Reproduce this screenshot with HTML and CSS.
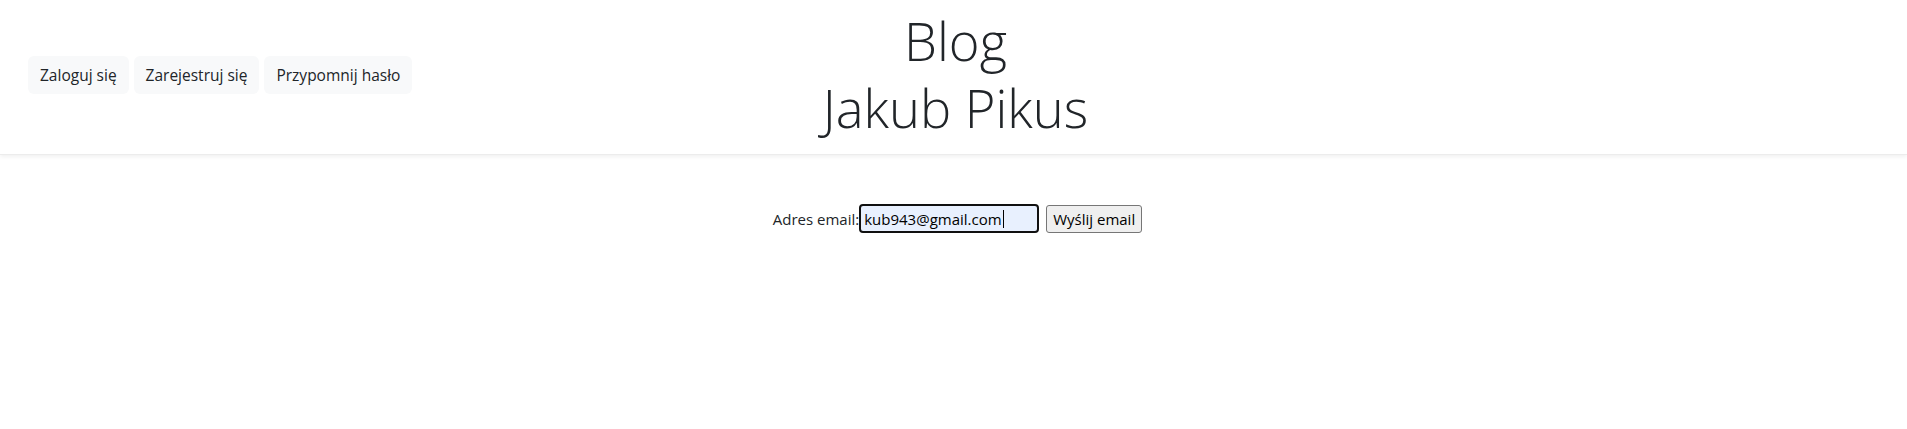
FILE: index.html
```html
<!DOCTYPE html>
<html lang="pl">
<head>
<meta charset="utf-8">
<title>Blog Jakub Pikus</title>
<link rel="stylesheet" href="styles.css">
</head>
<body>
<header class="topbar">
  <nav class="nav-left">
    <a class="btn-light" href="#">Zaloguj się</a>
    <a class="btn-light" href="#">Zarejestruj się</a>
    <a class="btn-light" href="#">Przypomnij hasło</a>
  </nav>
  <h1 class="title">Blog<br>Jakub Pikus</h1>
  <div class="nav-right"></div>
</header>
<main class="content">
  <form class="reset-form">
    <label class="field-label" for="email">Adres email:</label>
    <span class="input-wrap">
      <input class="email-input" id="email" type="text" value="kub943@gmail.com">
      <span class="caret"></span>
    </span>
    <button class="send-btn" type="button">Wyślij email</button>
  </form>
</main>
</body>
</html>
```
FILE: styles.css
```css
html, body {
  margin: 0;
  padding: 0;
  background: #fff;
}
body {
  font-family: "Open Sans", "Noto Sans", sans-serif;
  font-size: 15px;
  color: #212529;
}
.topbar {
  display: grid;
  grid-template-columns: 1fr auto 1fr;
  align-items: center;
  padding: 7px 28px 14px;
  height: 155px;
  box-sizing: border-box;
  border-bottom: 1px solid #ececec;
  box-shadow: 0 2px 4px rgba(0,0,0,0.06);
}
.nav-left {
  display: flex;
  gap: 5px;
  position: relative;
  top: 1px;
}
.btn-light {
  display: inline-block;
  background: #f8f9fa;
  color: #212529;
  text-decoration: none;
  padding: 7px 12px;
  line-height: 24px;
  border-radius: 6px;
  font-size: 15.5px;
}
.title {
  margin: 0;
  font-weight: 300;
  font-size: 52.5px;
  line-height: 67px;
  text-align: center;
  color: #212529;
  position: relative;
  left: 2px;
}
.content {
  display: flex;
  justify-content: center;
  padding-top: 49px;
  padding-left: 8px;
}
.reset-form {
  display: flex;
  align-items: center;
}
.field-label {
  font-size: 15px;
  line-height: 24px;
  color: #212529;
}
.input-wrap {
  position: relative;
  display: inline-block;
}
.email-input {
  box-sizing: border-box;
  width: 180px;
  height: 29px;
  margin: 0;
  padding: 0 3px;
  border: 2px solid #101010;
  border-radius: 4px;
  background: #e8f0fe;
  font-family: "Open Sans", "Noto Sans", sans-serif;
  font-size: 15px;
  color: #000;
  outline: none;
  display: block;
}
.caret {
  position: absolute;
  left: 144px;
  top: 6px;
  width: 1px;
  height: 18px;
  background: #000;
}
.send-btn {
  margin-left: 7px;
  box-sizing: border-box;
  height: 28px;
  padding: 0 6px;
  background: #efefef;
  border: 1px solid #767676;
  border-radius: 3px;
  font-family: "Open Sans", "Noto Sans", sans-serif;
  font-size: 15px;
  color: #000;
}
```
